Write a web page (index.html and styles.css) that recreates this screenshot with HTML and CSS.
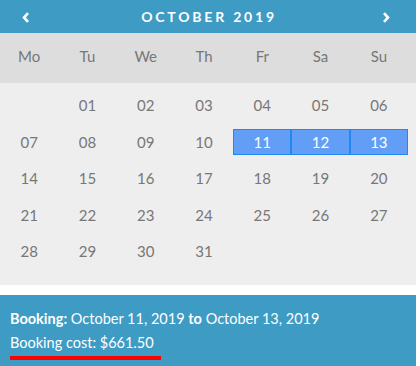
FILE: index.html
```html
<!DOCTYPE html>
<html lang="en">
<head>
    <meta charset="UTF-8">
    <meta name="viewport" content="width=device-width, initial-scale=1.0">
    <title>Booking Calendar</title>
    <link rel="stylesheet" href="styles.css">
</head>
<body>
    <div class="calendar">
        <header class="cal-head">
            <a class="nav-arrow" href="#" aria-label="Previous month">
                <svg width="8" height="11" viewBox="0 0 8 11"><path d="M6 1.2 L2 5.5 L6 9.8" fill="none" stroke="#fff" stroke-width="2.6"/></svg>
            </a>
            <h1 class="month">October 2019</h1>
            <a class="nav-arrow" href="#" aria-label="Next month">
                <svg width="8" height="11" viewBox="0 0 8 11"><path d="M2 1.2 L6 5.5 L2 9.8" fill="none" stroke="#fff" stroke-width="2.6"/></svg>
            </a>
        </header>

        <div class="weekdays">
            <span>Mo</span><span>Tu</span><span>We</span><span>Th</span><span>Fr</span><span>Sa</span><span>Su</span>
        </div>

        <div class="days">
            <span class="empty"></span>
            <span>01</span><span>02</span><span>03</span><span>04</span><span>05</span><span>06</span>
            <span>07</span><span>08</span><span>09</span><span>10</span>
            <span class="selected">11</span><span class="selected">12</span><span class="selected">13</span>
            <span>14</span><span>15</span><span>16</span><span>17</span><span>18</span><span>19</span><span>20</span>
            <span>21</span><span>22</span><span>23</span><span>24</span><span>25</span><span>26</span><span>27</span>
            <span>28</span><span>29</span><span>30</span><span>31</span>
        </div>
    </div>

    <section class="booking">
        <p><strong>Booking:</strong> October 11, 2019 <strong>to</strong> October 13, 2019</p>
        <p><span class="cost">Booking cost: $661.50</span></p>
    </section>
</body>
</html>
```

FILE: styles.css
```css
/* Booking calendar */
body {
    font-family: Lato, "Noto Sans", sans-serif;
    margin: 0;
    padding: 0;
    background: #fff;
    color: #777;
}

.calendar {
    width: 416px;
}

.cal-head {
    background: #3d9bc4;
    height: 33px;
    display: flex;
    justify-content: space-between;
    align-items: center;
    padding: 0 26px 0 22px;
    box-sizing: border-box;
}

.nav-arrow {
    display: flex;
    padding-top: 1px;
}

.month {
    margin: 0;
    color: #fff;
    font-size: 14px;
    font-weight: 700;
    letter-spacing: 2.8px;
    text-transform: uppercase;
    padding-left: 6px;
}

.weekdays {
    background: #dddddd;
    display: grid;
    grid-template-columns: repeat(7, 1fr);
    width: 408px;
    height: 46px;
    padding: 0 8px 4px 0;
    align-items: center;
    font-size: 15px;
}

.weekdays span,
.days span {
    text-align: center;
}

.days {
    background: #eeeeee;
    display: grid;
    grid-template-columns: repeat(7, 1fr);
    grid-auto-rows: 26px;
    row-gap: 10.5px;
    width: 408px;
    padding: 9px 8px 21px 0;
    font-size: 15px;
}

.days span {
    line-height: 26px;
}

.days .selected {
    background: #629df6;
    border: 1px solid #1e88f4;
    color: #fff;
    line-height: 24px;
}

.booking {
    margin-top: 10px;
    background: #3d9bc4;
    width: 416px;
    height: 71px;
    padding: 14px 10px 10px;
    box-sizing: border-box;
    color: #fff;
    font-size: 14.5px;
}

.booking p {
    margin: 0 0 4px;
    line-height: 20px;
}

.cost {
    display: inline-block;
    padding: 0 7px 3px 0;
    border-bottom: 4px solid #ff0000;
    line-height: 20px;
}
```
